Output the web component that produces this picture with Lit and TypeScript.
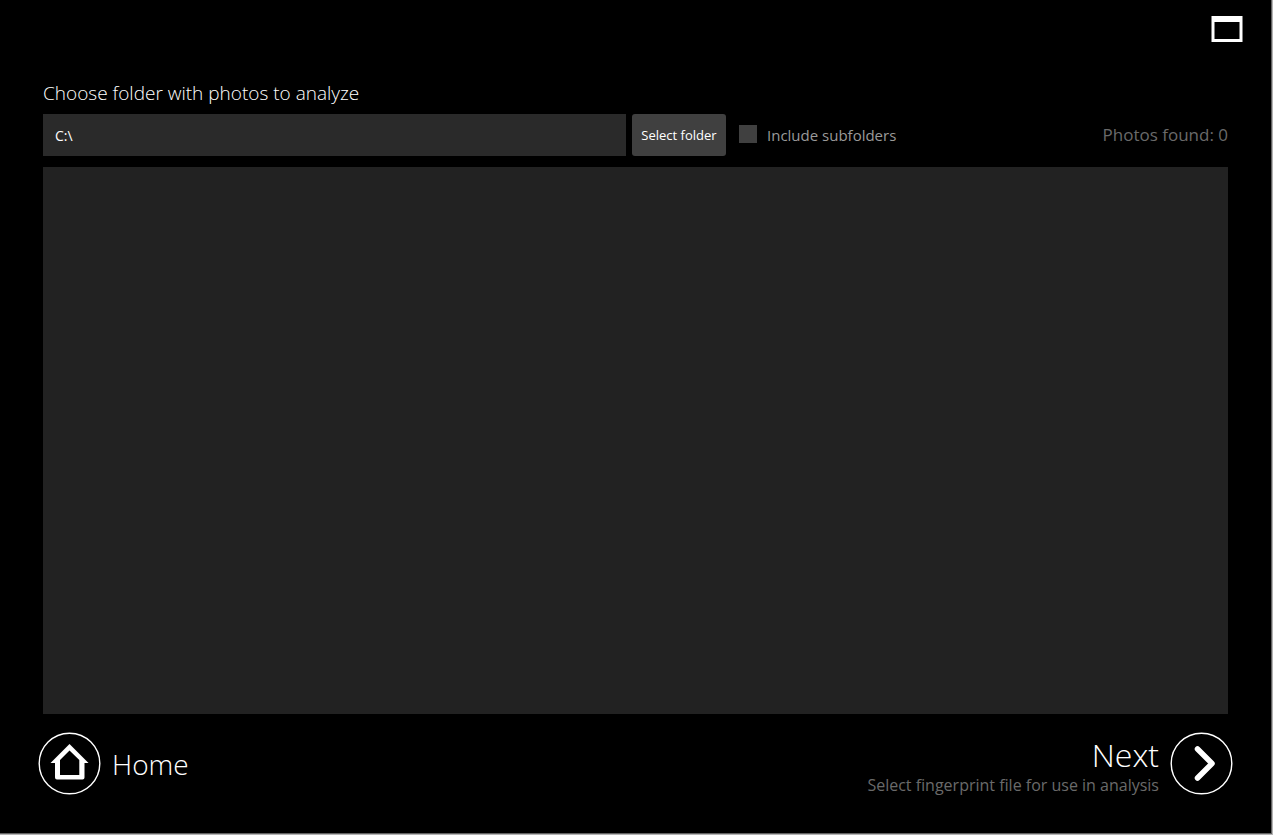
import { LitElement, html, css } from "lit";
import { customElement, state } from "lit/decorators.js";

@customElement("app-root")
export class AppRoot extends LitElement {
  @state() private folder = "C:\\";
  @state() private photosFound = 0;

  static styles = css`
    :host {
      display: block;
      font-family: "Open Sans", "Noto Sans", sans-serif;
      color: #fff;
    }
    * {
      box-sizing: border-box;
    }
    button {
      font-family: inherit;
      color: inherit;
      background: none;
      border: 0;
      padding: 0;
      cursor: pointer;
    }
    svg {
      display: block;
      flex: none;
    }
    .window {
      min-height: 100vh;
      display: flex;
      flex-direction: column;
      background: #000;
      border-right: 1px solid #b4b4b4;
      border-bottom: 1px solid #b4b4b4;
      box-shadow: inset -1px -1px 0 #626262;
    }
    .titlebar {
      display: flex;
      justify-content: flex-end;
      padding: 15px 29px 0 0;
    }
    .content {
      flex: 1;
      display: flex;
      flex-direction: column;
      padding: 36px 44px 18px 43px;
    }
    .heading {
      font-size: 19px;
      line-height: 28px;
      font-weight: 300;
    }
    .toolbar {
      display: flex;
      align-items: center;
      padding: 7px 0 11px;
    }
    .path {
      flex: 0 1 583px;
      min-width: 0;
      height: 42px;
      padding: 0 12px;
      border: 0;
      border-radius: 0;
      background: #2a2a2a;
      color: #fff;
      font-family: inherit;
      font-size: 14px;
    }
    .select {
      flex: none;
      height: 42px;
      min-width: 94px;
      margin-left: 6px;
      background: #404040;
      border-radius: 3px;
      font-size: 13px;
      text-align: center;
    }
    .option {
      display: flex;
      align-items: center;
      gap: 10px;
      margin-left: 13px;
      color: #9a9a9a;
      font-size: 15px;
      line-height: 20px;
    }
    .check {
      appearance: none;
      width: 18px;
      height: 18px;
      margin: 0 0 2px;
      background: #404040;
    }
    .check:checked {
      background: #9a9a9a;
    }
    .count {
      margin-left: auto;
      color: #6a6a6a;
      font-size: 17px;
      line-height: 24px;
    }
    .photos {
      flex: 1;
      min-height: 200px;
      background: #222;
    }
    .nav {
      display: flex;
      justify-content: space-between;
      padding: 0 39px 39px 38px;
    }
    .step {
      display: flex;
      align-items: center;
      gap: 11px;
      font-weight: 300;
    }
    .home {
      font-size: 28px;
      line-height: 40px;
    }
    .labels {
      display: flex;
      flex-direction: column;
      align-items: flex-end;
      padding-top: 3px;
    }
    .next {
      font-size: 32px;
      line-height: 40px;
    }
    .hint {
      color: #6a6a6a;
      font-size: 16px;
      line-height: 20px;
      font-weight: 400;
    }
  `;

  render() {
    return html`
      <div class="window">
        <header class="titlebar">
          <button aria-label="Maximize window">
            <svg width="32" height="28" viewBox="0 0 32 28">
              <path d="M0.5 1H31.5V27H0.5Z M3.5 7V24H28.5V7Z" fill="#fff" fill-rule="evenodd" />
            </svg>
          </button>
        </header>
        <main class="content">
          <label class="heading" for="path">Choose folder with photos to analyze</label>
          <div class="toolbar">
            <input id="path" class="path" type="text" .value=${this.folder} />
            <button class="select">Select folder</button>
            <label class="option"><input class="check" type="checkbox" />Include subfolders</label>
            <span class="count">Photos found: ${this.photosFound}</span>
          </div>
          <section class="photos" aria-label="Photos"></section>
        </main>
        <nav class="nav">
          <button class="step">
            <svg width="63" height="63" viewBox="0 0 63 63" fill="none" stroke="#fff">
              <circle cx="31.5" cy="31.5" r="30.3" stroke-width="1.4" />
              <path
                d="M31.5 12L50.5 31H46.5V45.5Q46.5 47.5 44.5 47.5H19Q17 47.5 17 45.5V31H12.5Z M31.5 18.5L22 28V43H41.3V28Z"
                fill="#fff"
                fill-rule="evenodd"
                stroke="none"
              />
            </svg>
            <span class="home">Home</span>
          </button>
          <button class="step">
            <span class="labels">
              <span class="next">Next</span>
              <span class="hint">Select fingerprint file for use in analysis</span>
            </span>
            <svg width="63" height="63" viewBox="0 0 63 63" fill="none" stroke="#fff">
              <circle cx="31.5" cy="31.5" r="30.3" stroke-width="1.4" />
              <path d="M27.5 17L42 31.5L27.5 46" stroke-width="5.5" stroke-linecap="round" stroke-linejoin="round" />
            </svg>
          </button>
        </nav>
      </div>
    `;
  }
}
